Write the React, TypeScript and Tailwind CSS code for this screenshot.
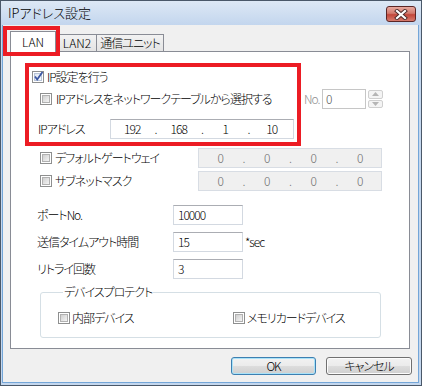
import React, { Fragment } from "react";

const FONT =
  "font-['Noto_Sans_CJK_JP','Noto_Sans',sans-serif] [font-feature-settings:'palt'] font-light";

function Checkbox({ checked = false }: { checked?: boolean }) {
  return (
    <span className="w-[12px] h-[12px] border border-[#8e8f8f] bg-white p-[1px] flex shrink-0">
      <span
        className={`relative flex-1 border ${
          checked
            ? "border-[#b8c4d8] bg-[linear-gradient(135deg,#dfe6f0,#fbfcfe)]"
            : "border-[#b1b1b1] bg-[linear-gradient(135deg,#cfcfcf,#f4f4f4)]"
        }`}
      >
        {checked && (
          <svg
            className="absolute left-[-2px] top-[-3px]"
            width="11"
            height="11"
            viewBox="0 0 11 11"
          >
            <path
              d="M2 5.5 L4.2 8.5 L9.5 1"
              fill="none"
              stroke="#3c57a3"
              strokeWidth="1.8"
            />
          </svg>
        )}
      </span>
    </span>
  );
}

function IpField({
  values,
  disabled = false,
}: {
  values: string[];
  disabled?: boolean;
}) {
  return (
    <div
      className={`h-[20px] w-[184px] border flex items-center leading-[14px] ${
        disabled
          ? "bg-[#f0f0f0] border-[#d8dde4] text-[#6d6d6d]"
          : "bg-white border-[#d3d9e1] border-t-[#abadb3] text-black"
      }`}
    >
      {values.map((v, i) => (
        <Fragment key={i}>
          {i > 0 && <span className="w-[4px] text-center">.</span>}
          <span className="flex-1 text-center">{v}</span>
        </Fragment>
      ))}
    </div>
  );
}

function TextInput({ value }: { value: string }) {
  return (
    <div className="h-[20px] w-[70px] border border-[#d3d9e1] border-t-[#abadb3] bg-white flex items-center pl-[4px] leading-[14px]">
      {value}
    </div>
  );
}

export default function App() {
  return (
    <div
      className={`w-[422px] h-[386px] flex flex-col border border-[#4a5869] bg-[#c4d7ee] pl-[1px] pr-[2px] pb-[2px] text-[12px] text-black ${FONT}`}
    >
      {/* Title bar */}
      <div className="h-[24px] shrink-0 flex items-start -ml-[1px] -mr-[2px] pl-[7px] pr-[5px] bg-[linear-gradient(to_bottom,#dde8f5,#c3d6ee)]">
        <span className="text-[13px] leading-[16px] mt-[4px] text-black">
          IPアドレス設定
        </span>
        <div className="ml-auto mt-[5px] w-[30px] h-[16px] rounded-[3px] border border-[#5b2626] bg-[linear-gradient(to_bottom,#e8aaa0_0%,#d27a6e_45%,#c2463a_55%,#d77c6e_100%)] flex items-center justify-center">
          <svg width="14" height="11" viewBox="0 0 14 11">
            <path
              d="M3 2 L11 9 M11 2 L3 9"
              stroke="#4b2a2a"
              strokeWidth="4"
              strokeLinecap="square"
            />
            <path
              d="M3 2 L11 9 M11 2 L3 9"
              stroke="#ffffff"
              strokeWidth="2.2"
              strokeLinecap="square"
            />
          </svg>
        </div>
      </div>

      {/* Client area */}
      <div className="relative flex-1 flex flex-col bg-[#f0f0f0] border border-t-0 border-[#74a6d8] tracking-[-1px]">
        {/* Tabs */}
        <div className="mt-[6px] ml-[7px] h-[21px] flex items-end">
          <div className="relative z-10 h-[21px] w-[46px] bg-white border border-b-0 border-[#898c95] flex justify-center pt-[3px] leading-[14px] tracking-normal">
            LAN
          </div>
          <div className="h-[18px] w-[40px] ml-[1px] border border-b-0 border-[#898c95] bg-[linear-gradient(to_bottom,#f2f2f2,#e3e3e3)] flex justify-center pt-[1px] leading-[14px] tracking-normal">
            LAN2
          </div>
          <div className="h-[18px] w-[68px] -ml-px border border-b-0 border-[#898c95] bg-[linear-gradient(to_bottom,#f2f2f2,#e3e3e3)] flex justify-center pt-[1px] leading-[14px]">
            通信ユニット
          </div>
        </div>

        {/* Panel */}
        <div className="relative -mt-px ml-[7px] w-[400px] h-[298px] border border-[#898c95] bg-white flex flex-col leading-[14px]">
          {/* Row 1 */}
          <div className="mt-[18px] ml-[21px] h-[14px] flex items-center gap-[3px]">
            <Checkbox checked />
            <span>IP設定を行う</span>
          </div>
          {/* Row 2 */}
          <div className="mt-[5px] h-[20px] flex items-center">
            <div className="ml-[29px] w-[264px] flex items-center gap-[4px]">
              <Checkbox />
              <span>IPアドレスをネットワークテーブルから選択する</span>
            </div>
            <span className="w-[18px] text-[#8d8d8d]">No.</span>
            <div className="h-[20px] w-[44px] border border-[#c6c6c6] bg-white flex items-center pl-[3px] text-[#555]">
              0
            </div>
            <div className="ml-[2px] w-[15px] h-[18px] flex flex-col gap-[1px]">
              <div className="flex-1 border border-[#cfcfcf] rounded-[2px] bg-[#f4f4f4] flex items-center justify-center">
                <svg width="7" height="4" viewBox="0 0 7 4">
                  <path d="M0 4 L3.5 0 L7 4 Z" fill="#b5b5b5" />
                </svg>
              </div>
              <div className="flex-1 border border-[#cfcfcf] rounded-[2px] bg-[#f4f4f4] flex items-center justify-center">
                <svg width="7" height="4" viewBox="0 0 7 4">
                  <path d="M0 0 L3.5 4 L7 0 Z" fill="#b5b5b5" />
                </svg>
              </div>
            </div>
          </div>
          {/* Row 3 */}
          <div className="mt-[10px] h-[20px] flex items-center">
            <span className="ml-[27px] w-[72px]">IPアドレス</span>
            <IpField values={["192", "168", "1", "10"]} />
          </div>
          {/* Row 4 */}
          <div className="mt-[9px] h-[20px] flex items-center">
            <div className="ml-[29px] w-[158px] flex items-center gap-[3px]">
              <Checkbox />
              <span>デフォルトゲートウェイ</span>
            </div>
            <IpField values={["0", "0", "0", "0"]} disabled />
          </div>
          {/* Row 5 */}
          <div className="mt-[3px] h-[20px] flex items-center">
            <div className="ml-[29px] w-[158px] flex items-center gap-[3px]">
              <Checkbox />
              <span>サブネットマスク</span>
            </div>
            <IpField values={["0", "0", "0", "0"]} disabled />
          </div>
          {/* Row 6 */}
          <div className="mt-[14px] h-[20px] flex items-center">
            <span className="ml-[26px] w-[136px]">ポートNo.</span>
            <TextInput value="10000" />
          </div>
          {/* Row 7 */}
          <div className="mt-[7px] h-[20px] flex items-center">
            <span className="ml-[26px] w-[136px]">送信タイムアウト時間</span>
            <TextInput value="15" />
            <span className="ml-[2px]">*sec</span>
          </div>
          {/* Row 8 */}
          <div className="mt-[7px] h-[20px] flex items-center">
            <span className="ml-[26px] w-[136px]">リトライ回数</span>
            <TextInput value="3" />
          </div>
          {/* Group */}
          <fieldset className="mt-[6px] ml-[29px] w-[341px] h-[53px] border border-[#d5dfe5] rounded-[3px] pl-[17px]">
            <legend className="ml-[5px] px-[1px] leading-[14px]">
              デバイスプロテクト
            </legend>
            <div className="mt-[12px] h-[14px] flex items-center">
              <div className="w-[175px] flex items-center gap-[2px]">
                <Checkbox />
                <span>内部デバイス</span>
              </div>
              <div className="flex items-center gap-[2px]">
                <Checkbox />
                <span>メモリカードデバイス</span>
              </div>
            </div>
          </fieldset>

          {/* highlight box 2 */}
          <div className="absolute left-[14px] top-[11px] w-[276px] h-[83px] border-[4px] border-[#ec1c24]" />
        </div>

        {/* Buttons */}
        <div className="mt-[8px] flex justify-end gap-[10px] pr-[6px] leading-[14px]">
          <div className="w-[85px] h-[18px] rounded-[3px] border border-[#3c7fb1] shadow-[inset_0_0_0_1px_#a9e2f8] bg-[linear-gradient(to_bottom,#f2f2f2_0%,#ebebeb_50%,#dddddd_50%,#cfcfcf_100%)] flex items-center justify-center">
            OK
          </div>
          <div className="w-[86px] h-[18px] rounded-[3px] border border-[#707070] shadow-[inset_0_0_0_1px_#fcfcfc] bg-[linear-gradient(to_bottom,#f2f2f2_0%,#ebebeb_50%,#dddddd_50%,#cfcfcf_100%)] flex items-center justify-center">
            キャンセル
          </div>
        </div>

        {/* highlight box 1 */}
        <div className="absolute left-0 top-[1px] w-[57px] h-[30px] border-[4px] border-[#ec1c24] z-20" />
      </div>
    </div>
  );
}
